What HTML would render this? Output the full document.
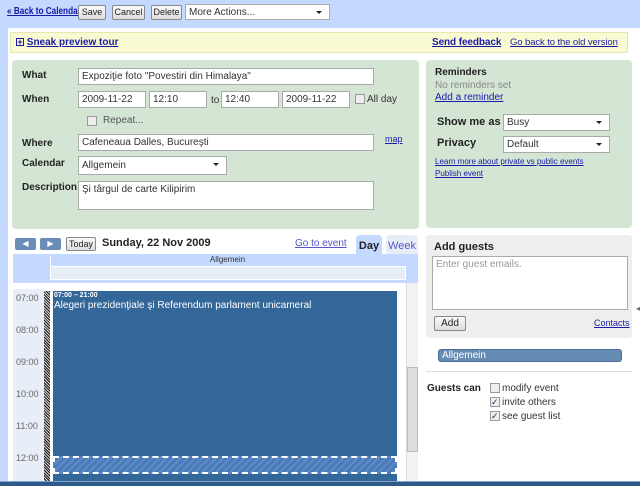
<!DOCTYPE html>
<html><head><meta charset="utf-8"><style>
*{box-sizing:border-box}
body{margin:0;width:640px;height:486px;overflow:hidden;background:#fff;font-family:"Liberation Sans",Arial,sans-serif;font-size:11px;position:relative}
.a{position:absolute;white-space:nowrap}
a,.lnk{color:#1a1aa6;text-decoration:underline}
.btn{position:absolute;height:15px;border:1px solid #888;border-radius:2px;background:linear-gradient(#fafafa,#ddd);font-size:9px;text-align:center;line-height:13px;color:#222}
.inp{position:absolute;height:17px;border:1px solid #aaa;background:#fff;font-size:10px;line-height:15px;padding-left:3px;color:#333;white-space:nowrap;overflow:hidden}
.lbl{position:absolute;font-weight:bold;font-size:10px;color:#222}
.sel::after{content:"";position:absolute;right:7px;top:6px;border:3px solid transparent;border-top:3px solid #222}
.cb{position:absolute;width:10px;height:10px;border:1px solid #999;background:#eee;font-size:9px;line-height:8px;color:#236}
.t{position:absolute;left:16px;font-size:9px;color:#666}
</style></head><body>
<div class="a" style="left:0;top:0;width:640px;height:28px;background:#c3d9ff"></div>
<div class="a" style="left:0;top:0;width:8px;height:486px;background:#c3d9ff"></div>
<div class="a" style="left:8px;top:28px;width:632px;height:458px;background:#fff"></div>
<a class="a" style="left:7px;top:6px;font-size:10px;font-weight:bold;transform:scaleX(0.82);transform-origin:0 0">« Back to Calendar</a>
<div class="btn" style="left:78px;top:5px;width:28px">Save</div>
<div class="btn" style="left:112px;top:5px;width:33px">Cancel</div>
<div class="btn" style="left:151px;top:5px;width:31px">Delete</div>
<div class="inp sel" style="left:185px;top:4px;width:145px;height:16px;font-size:10px">More Actions...</div>
<div class="a" style="left:10px;top:32px;width:618px;height:21px;background:#fafad2;border:1px solid #e6e6b0"></div>
<div class="a" style="left:16px;top:37px;font-size:10px;font-weight:bold;color:#1a1aa6"><span style="display:inline-block;width:8px;height:8px;border:1px solid #1a1aa6;font-size:9px;line-height:6px;text-align:center">+</span> <u>Sneak preview tour</u></div>
<a class="a" style="left:432px;top:37px;font-size:10px;font-weight:bold;letter-spacing:-0.1px">Send feedback</a>
<a class="a" style="left:510px;top:37px;font-size:9.5px;letter-spacing:-0.1px">Go back to the old version</a>
<div class="a" style="left:12px;top:60px;width:407px;height:169px;background:#d4e5d4;border-radius:4px"></div>
<div class="lbl" style="left:22px;top:70px">What</div>
<div class="inp" style="left:78px;top:68px;width:296px">Expoziţie foto "Povestiri din Himalaya"</div>
<div class="lbl" style="left:22px;top:94px">When</div>
<div class="inp" style="left:78px;top:91px;width:68px">2009-11-22</div>
<div class="inp" style="left:149px;top:91px;width:58px">12:10</div>
<div class="a" style="left:211px;top:95px;font-size:10px;color:#333">to</div>
<div class="inp" style="left:221px;top:91px;width:58px">12:40</div>
<div class="inp" style="left:282px;top:91px;width:68px">2009-11-22</div>
<div class="cb" style="left:355px;top:94px"></div><div class="a" style="left:367px;top:94px;font-size:10px;color:#333">All day</div>
<div class="cb" style="left:87px;top:116px"></div><div class="a" style="left:103px;top:115px;font-size:10px;color:#555">Repeat...</div>
<div class="lbl" style="left:22px;top:138px">Where</div>
<div class="inp" style="left:78px;top:134px;width:296px">Cafeneaua Dalles, Bucureşti</div>
<a class="a" style="left:385px;top:134px;font-size:9px">map</a>
<div class="lbl" style="left:22px;top:158px">Calendar</div>
<div class="inp sel" style="left:78px;top:156px;width:149px;height:19px;line-height:17px">Allgemein</div>
<div class="lbl" style="left:22px;top:182px">Description</div>
<div class="inp" style="left:78px;top:181px;width:296px;height:29px">Şi târgul de carte Kilipirim</div>
<div class="a" style="left:426px;top:60px;width:206px;height:168px;background:#d4e5d4;border-radius:4px"></div>
<div class="lbl" style="left:435px;top:67px">Reminders</div>
<div class="a" style="left:435px;top:80px;font-size:10px;color:#888">No reminders set</div>
<a class="a" style="left:435px;top:92px;font-size:10px">Add a reminder</a>
<div class="lbl" style="left:437px;top:116px;font-size:11px">Show me as</div>
<div class="inp sel" style="left:503px;top:114px;width:107px">Busy</div>
<div class="lbl" style="left:437px;top:137px;font-size:11px">Privacy</div>
<div class="inp sel" style="left:503px;top:136px;width:107px">Default</div>
<a class="a" style="left:435px;top:157px;font-size:8px">Learn more about private vs public events</a>
<a class="a" style="left:435px;top:169px;font-size:8px">Publish event</a>
<div class="a" style="left:426px;top:235px;width:206px;height:103px;background:#eee;border-radius:3px"></div>
<div class="lbl" style="left:434px;top:241px;font-size:11px">Add guests</div>
<div class="inp" style="left:432px;top:256px;width:196px;height:54px;color:#999">Enter guest emails.</div>
<div class="btn" style="left:434px;top:316px;width:32px;height:15px;font-size:10px">Add</div>
<a class="a" style="left:594px;top:318px;font-size:9px">Contacts</a>
<div class="a" style="left:438px;top:349px;width:184px;height:13px;background:#668cb3;border:1px solid #4a6d99;border-radius:3px;color:#fff;font-size:10px;line-height:11px;padding-left:3px">Allgemein</div>
<div class="a" style="left:426px;top:371px;width:206px;height:1px;background:#ddd"></div>
<div class="a" style="left:427px;top:383px;font-size:10px;font-weight:bold;color:#222">Guests can</div>
<div class="cb" style="left:490px;top:383px"></div><div class="a" style="left:502px;top:383px;font-size:10px;color:#333">modify event</div>
<div class="cb" style="left:490px;top:397px">✓</div><div class="a" style="left:502px;top:397px;font-size:10px;color:#333">invite others</div>
<div class="cb" style="left:490px;top:411px">✓</div><div class="a" style="left:502px;top:411px;font-size:10px;color:#333">see guest list</div>
<div class="a" style="left:636px;top:304px;color:#668;font-size:8px">◂</div>
<div class="a" style="left:15px;top:238px;width:21px;height:12px;background:#6a8db8;border-radius:2px;color:#fff;font-size:8px;text-align:center;line-height:12px">◀</div>
<div class="a" style="left:40px;top:238px;width:21px;height:12px;background:#6a8db8;border-radius:2px;color:#fff;font-size:8px;text-align:center;line-height:12px">▶</div>
<div class="btn" style="left:66px;top:237px;width:30px;height:14px;line-height:12px">Today</div>
<div class="a" style="left:102px;top:237px;font-size:11px;font-weight:bold;color:#222">Sunday, 22 Nov 2009</div>
<a class="a" style="left:295px;top:238px;font-size:10px;color:#55c">Go to event</a>
<div class="a" style="left:356px;top:235px;width:26px;height:20px;background:#c3d9ff;border-radius:4px 4px 0 0;font-weight:bold;font-size:11px;text-align:center;line-height:22px;color:#222">Day</div>
<div class="a" style="left:386px;top:235px;width:32px;height:20px;background:#e8eef7;border-radius:4px 4px 0 0;font-size:11px;text-align:center;line-height:22px;color:#55c">Week</div>
<div class="a" style="left:13px;top:254px;width:405px;height:29px;background:#c3d9ff"></div>
<div class="a" style="left:50px;top:256px;width:1px;height:24px;background:#fff"></div>
<div class="a" style="left:50px;top:255px;width:355px;text-align:center;font-size:8px;color:#333">Allgemein</div>
<div class="a" style="left:50px;top:266px;width:356px;height:14px;background:#e8eef7;border:1px solid #fff"></div>
<div class="a" style="left:13px;top:283px;width:405px;height:199px;background:#fff"></div>
<div class="a" style="left:13px;top:289px;width:31px;height:193px;background:#e8eef7"></div>
<div class="t" style="top:293px">07:00</div><div class="t" style="top:325px">08:00</div><div class="t" style="top:357px">09:00</div><div class="t" style="top:389px">10:00</div><div class="t" style="top:421px">11:00</div><div class="t" style="top:453px">12:00</div>
<div class="a" style="left:44px;top:291px;width:6px;height:191px;background:repeating-linear-gradient(45deg,#222 0 1px,#ccc 1px 2px)"></div>
<div class="a" style="left:53px;top:291px;width:344px;height:191px;background:#336699"></div>
<div class="a" style="left:54px;top:292px;font-size:7px;font-weight:bold;color:#fff">07:00 – 21:00</div>
<div class="a" style="left:54px;top:300px;font-size:10px;color:#fff">Alegeri prezidenţiale şi Referendum parlament unicameral</div>
<div class="a" style="left:53px;top:456px;width:344px;height:18px;border:2px dashed #fff;background:repeating-linear-gradient(135deg,#4a7ab8 0 3px,#5d8cc8 3px 5px)"></div>
<div class="a" style="left:406px;top:283px;width:12px;height:199px;background:#f2f2f2;border-left:1px solid #ddd"></div>
<div class="a" style="left:407px;top:367px;width:11px;height:85px;background:#ddd;border:1px solid #bbb"></div>
<div class="a" style="left:0;top:481px;width:640px;height:5px;background:#2e5a8a;border-top:1px solid #7fa3cc"></div>
</body></html>
